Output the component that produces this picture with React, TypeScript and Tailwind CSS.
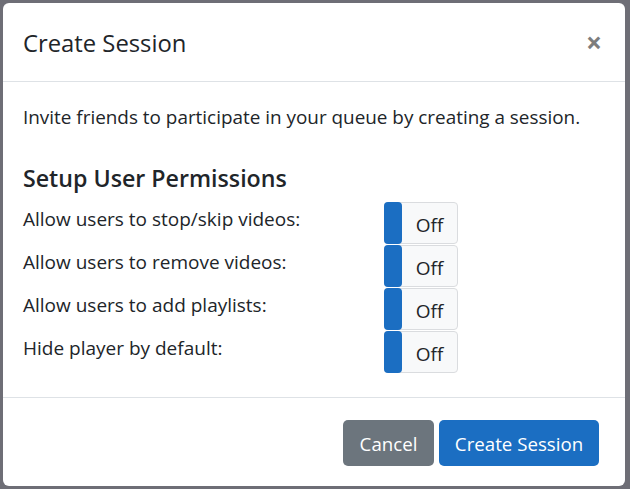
const permissions = [
  "Allow users to stop/skip videos:",
  "Allow users to remove videos:",
  "Allow users to add playlists:",
  "Hide player by default:",
];

function OffToggle() {
  return (
    <div className="flex h-[42px] w-[74px] rounded-[4px] border border-[#dadcdf] bg-[#f8f9fa]">
      <div className="-my-px -ml-px w-[18px] rounded-[4px] bg-[#1b6ec2]" />
      <div className="flex flex-1 items-center justify-center pt-[4px] text-[19px] text-[#212529]">Off</div>
    </div>
  );
}

export default function App() {
  return (
    <div
      className="h-[489px] w-[630px] bg-[#6e6e76] pt-[3px] pl-[3px]"
      style={{ fontFamily: '"Open Sans", sans-serif' }}
    >
      <div className="flex h-[483px] w-[622px] flex-col rounded-[6px] bg-white text-[#212529]">
        <div className="flex h-[79px] items-center justify-between border-b border-[#dee2e6] px-[20px] pt-[3px]">
          <h5 className="text-[23.8px] leading-none">Create Session</h5>
          <button className="mr-[3px] -mt-[3px] text-[28px] font-bold leading-none text-[#7d7d7d]">×</button>
        </div>

        <div className="px-[20px] pt-[20px]">
          <p className="text-[18.9px] leading-[31px]">
            Invite friends to participate in your queue by creating a session.
          </p>
          <h4 className="mt-[29px] text-[23.2px] font-semibold leading-[32px]">Setup User Permissions</h4>
          <div className="mt-[8px] flex flex-col gap-px">
            {permissions.map((label) => (
              <div key={label} className="flex">
                <div className="w-[361px] pt-[3px] text-[19px] leading-[28px]">{label}</div>
                <OffToggle />
              </div>
            ))}
          </div>
        </div>

        <div className="mt-auto flex h-[89px] items-start justify-end gap-[5px] border-t border-[#dee2e6] pt-[22px] pr-[26px]">
          <button className="h-[46px] w-[91px] rounded-[5px] bg-[#6c757d] pt-[3px] text-[18.7px] text-white">Cancel</button>
          <button className="h-[46px] w-[160px] rounded-[5px] bg-[#1b6ec2] pt-[3px] text-[18.7px] text-white">
            Create Session
          </button>
        </div>
      </div>
    </div>
  );
}
